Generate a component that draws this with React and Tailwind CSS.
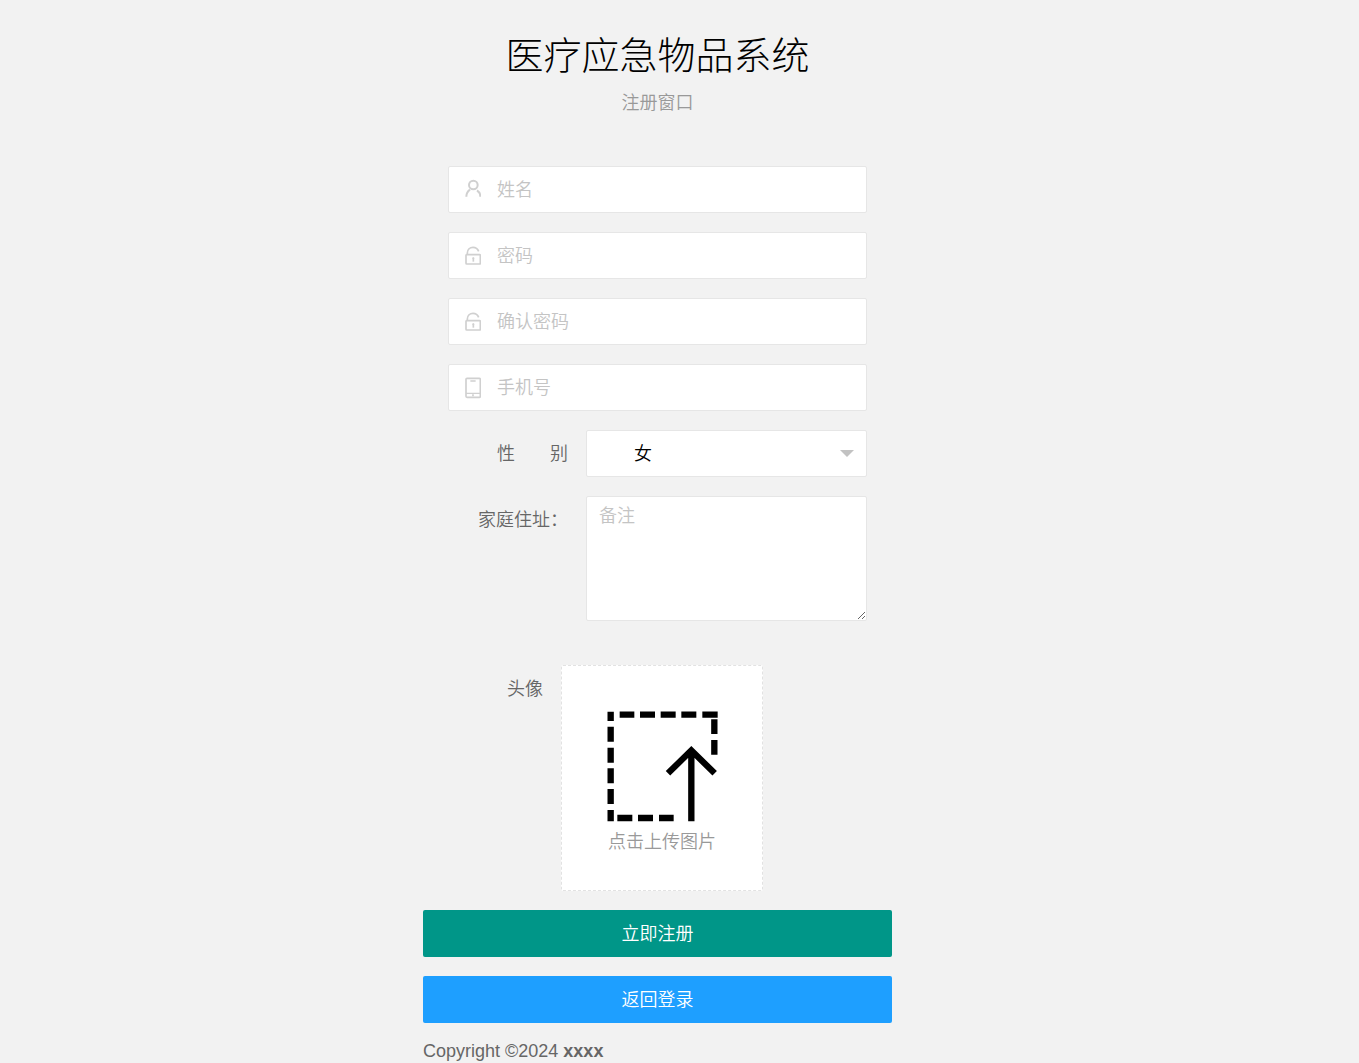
import { useState } from "react";

const UserIcon = () => (
  <svg viewBox="0 0 48 66" className="h-[22px] w-4 shrink-0" fill="none" stroke="#d0d0d0" strokeWidth="6" aria-hidden="true">
    <circle cx="25" cy="18" r="13" />
    <path d="M4 53C4 44 8 37 15 32M46 53C46 44 42 38 36 34" />
  </svg>
);

const LockIcon = () => (
  <svg viewBox="0 0 48 66" className="h-[22px] w-4 shrink-0" fill="none" stroke="#d0d0d0" strokeWidth="5" aria-hidden="true">
    <rect x="3" y="29" width="43" height="28" rx="2" />
    <path d="M7 29V24C7 13 15 7 24 7C32 7 38 11 41 19" />
    <circle cx="25" cy="40" r="3" fill="#d0d0d0" stroke="none" />
    <path d="M25 38V50" />
  </svg>
);

const PhoneIcon = () => (
  <svg viewBox="0 0 48 66" className="h-[22px] w-4 shrink-0" fill="none" stroke="#d0d0d0" strokeWidth="5" aria-hidden="true">
    <rect x="3" y="4" width="43" height="57" rx="3" />
    <path d="M3 49H45M16 12H32" strokeWidth="4" />
    <path d="M24 52V58" />
  </svg>
);

const UploadIcon = () => (
  <svg viewBox="348 168 333 333" className="h-[111px] w-[111px]" fill="none" stroke="#000" strokeWidth="19" aria-hidden="true">
    <path d="M359 170V198M359 215V260M359 278V323M359 340V385M359 402V447M359 465V499" />
    <path d="M386 179H430M447 179H492M509 179H554M571 179H616M634 179H680" />
    <path d="M670 193V237M670 255V299" />
    <path d="M379 489H424M441 489H486M504 489H548" />
    <path d="M601 290V499M531 355L601 286L671 355" />
  </svg>
);

const fields = [
  { name: "username", label: "姓名", type: "text", Icon: UserIcon },
  { name: "password", label: "密码", type: "password", Icon: LockIcon },
  { name: "repassword", label: "确认密码", type: "password", Icon: LockIcon },
  { name: "phone", label: "手机号", type: "text", Icon: PhoneIcon },
];

const App = () => {
  const [form, setForm] = useState({ gender: "女" });

  const onChange = (event) => {
    const { name, value } = event.target;
    setForm((prev) => ({ ...prev, [name]: value }));
  };

  return (
    <div className="min-h-screen bg-[#f2f2f2] pr-11 font-['Liberation_Sans','Noto_Sans_CJK_SC',sans-serif] text-[18px] leading-6 font-[350] text-[#666]">
      <main className="mx-auto max-w-[469px] pt-7">
        {/* Header */}
        <header className="text-center">
          <h1 className="text-[38px] leading-[56px] font-light text-black">医疗应急物品系统</h1>
          <p className="mt-[7px] text-[#999]">注册窗口</p>
        </header>

        <form onSubmit={(e) => e.preventDefault()} className="mt-[51px] flex flex-col gap-[19px]">
          <div className="flex flex-col gap-[19px] px-[25px]">
            {fields.map(({ name, label, type, Icon }) => (
              <label
                key={name}
                className="flex h-[47px] items-center gap-4 rounded-[2px] border border-[#e6e6e6] bg-white px-4"
              >
                <Icon />
                <input
                  name={name}
                  type={type}
                  value={form[name] || ""}
                  onChange={onChange}
                  placeholder={label}
                  aria-label={label}
                  className="min-w-0 flex-1 text-black outline-none placeholder:text-[#c4c4c4]"
                />
              </label>
            ))}

            <div className="flex items-center">
              <label htmlFor="gender" className="flex-1 pr-[18px] text-right">
                性&nbsp;&nbsp;&nbsp;&nbsp;&nbsp;&nbsp;&nbsp;别
              </label>
              <div className="relative w-[281px]">
                <select
                  id="gender"
                  name="gender"
                  value={form.gender}
                  onChange={onChange}
                  className="block h-[47px] w-full appearance-none rounded-[2px] border border-[#e6e6e6] bg-white pl-[47px] text-black outline-none"
                >
                  <option>女</option>
                  <option>男</option>
                </select>
                <svg viewBox="0 0 14 7" className="pointer-events-none absolute top-5 right-[13px] h-[7px] w-3.5" fill="#c2c2c2" aria-hidden="true">
                  <path d="M0 0H14L7 7Z" />
                </svg>
              </div>
            </div>

            <div className="flex items-start">
              <label htmlFor="address" className="flex-1 pt-3 pr-[18px] text-right whitespace-nowrap">
                家庭住址：
              </label>
              <textarea
                id="address"
                name="address"
                value={form.address || ""}
                onChange={onChange}
                placeholder="备注"
                className="block h-[125px] w-[281px] resize rounded-[2px] border border-[#e6e6e6] bg-white px-3 py-[7px] text-black outline-none placeholder:text-[#c4c4c4]"
              />
            </div>

            {/* Avatar upload */}
            <div className="mt-[25px] flex items-start">
              <label htmlFor="avatar" className="w-[113px] pt-3 pr-[18px] text-right">
                头像
              </label>
              <button
                id="avatar"
                type="button"
                className="flex h-[226px] w-[202px] cursor-pointer flex-col items-center justify-center gap-2 rounded-[2px] border border-dashed border-[#e2e2e2] bg-white pt-2 text-[#999]"
              >
                <UploadIcon />
                <span>点击上传图片</span>
              </button>
            </div>
          </div>

          <button type="submit" className="h-[47px] cursor-pointer rounded-[2px] bg-[#009688] text-white">
            立即注册
          </button>
          <button type="button" className="h-[47px] cursor-pointer rounded-[2px] bg-[#1e9fff] text-white">
            返回登录
          </button>
        </form>

        <footer className="mt-4">
          Copyright ©2024 <strong>xxxx</strong>
        </footer>
      </main>
    </div>
  );
};

export default App;
